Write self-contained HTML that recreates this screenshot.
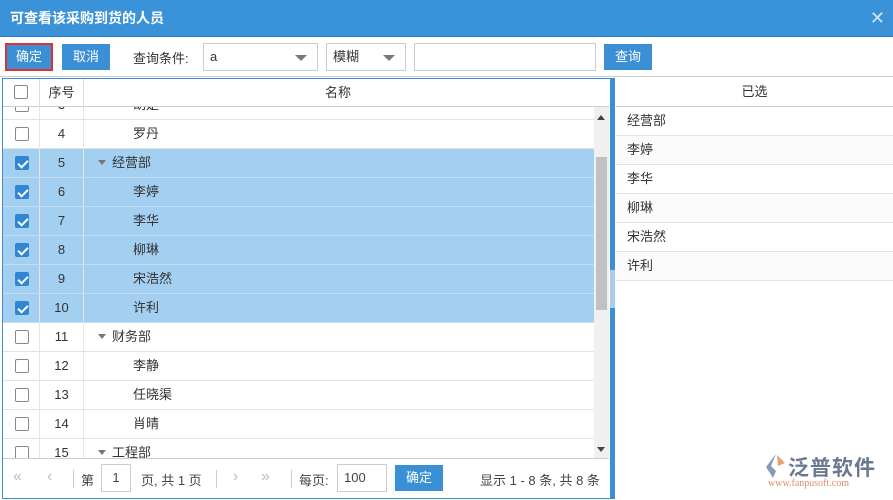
<!DOCTYPE html><html><head><meta charset="utf-8"><style>
*{box-sizing:border-box;margin:0;padding:0}
body{width:893px;height:500px;overflow:hidden;background:#fff;font-family:"Liberation Sans","Noto Sans CJK SC",sans-serif;font-size:13px;color:#333;position:relative}
.a{position:absolute}
.title{left:0;top:0;width:893px;height:37px;background:#3a93d8;color:#fff;font-weight:bold;font-size:14px;line-height:36px;padding-left:10px;border-bottom:1px solid #2f7fc0}
.btn{background:#3a8fd5;color:#fff;text-align:center;line-height:26px;height:26px}
.inp{border:1px solid #ccc;height:28px;background:#fff;line-height:26px;padding-left:6px}
.tri{position:absolute;right:10px;top:11px;width:0;height:0;border-left:6px solid transparent;border-right:6px solid transparent;border-top:6px solid #777}
.cb{position:absolute;left:12px;width:14px;height:14px;border:1px solid #888;border-radius:2px;background:#fff}
.cb.on{background:#2f86d2;border-color:#2f86d2}
.cb.on:after{content:"";position:absolute;left:4px;top:1px;width:4px;height:8px;border:solid #fff;border-width:0 2px 2px 0;transform:rotate(45deg)}
.row{position:absolute;left:0;width:591px;height:29px;border-bottom:1px solid #e2e2e2;line-height:28px}
.row.sel{background:#a3cff0;border-bottom-color:#c3def3}
.row .n{position:absolute;left:36px;width:45px;text-align:center;border-left:1px solid #e6e6e6;border-right:1px solid #e6e6e6;height:28px}
.row .t{position:absolute;left:95px}
.dt{display:inline-block;width:0;height:0;border-left:4px solid transparent;border-right:4px solid transparent;border-top:5px solid #777;margin-right:6px;vertical-align:2px}
.rr{position:absolute;left:0;width:278px;height:29px;border-bottom:1px solid #e2e2e2;line-height:28px;padding-left:11px}
</style></head><body>
<div class="a title">可查看该采购到货的人员</div>
<div class="a" style="right:8px;top:8px;color:#cfe4f5;font-size:18px">✕</div>
<div class="a btn" style="left:5px;top:43px;width:48px;height:28px;border:2px solid #e03030;line-height:24px">确定</div>
<div class="a btn" style="left:62px;top:44px;width:48px">取消</div>
<div class="a" style="left:133px;top:48px;font-size:13px">查询条件:</div>
<div class="a inp" style="left:203px;top:43px;width:115px">a<span class="tri"></span></div>
<div class="a inp" style="left:326px;top:43px;width:80px">模糊<span class="tri"></span></div>
<div class="a inp" style="left:414px;top:43px;width:182px"></div>
<div class="a btn" style="left:604px;top:44px;width:48px">查询</div>
<div class="a" style="left:0;top:76px;width:893px;height:1px;background:#ccc"></div>

<div class="a" style="left:2px;top:78px;width:613px;height:421px;border:1px solid #3a8fd5;border-right:5px solid #3a8fd5;overflow:hidden">
 <div class="a" style="left:0;top:0;width:606px;height:28px;border-bottom:1px solid #ccc;background:#fff;z-index:2;line-height:27px">
  <span class="cb" style="top:6px;left:11px"></span>
  <div class="a" style="left:36px;width:45px;height:28px;text-align:center;border-left:1px solid #ddd;border-right:1px solid #ddd">序号</div>
  <div class="a" style="left:322px">名称</div>
 </div>
 <div class="a" style="left:0;top:28px;width:591px;height:351px;overflow:hidden">
  <div class="row" style="top:-16px"><span class="cb" style="top:7px"></span><div class="n">3</div><div class="t" style="left:130px">胡楚</div></div>
  <div class="row" style="top:13px"><span class="cb" style="top:7px"></span><div class="n">4</div><div class="t" style="left:130px">罗丹</div></div>
  <div class="row sel" style="top:42px"><span class="cb on" style="top:7px"></span><div class="n">5</div><div class="t"><span class="dt"></span>经营部</div></div>
  <div class="row sel" style="top:71px"><span class="cb on" style="top:7px"></span><div class="n">6</div><div class="t" style="left:130px">李婷</div></div>
  <div class="row sel" style="top:100px"><span class="cb on" style="top:7px"></span><div class="n">7</div><div class="t" style="left:130px">李华</div></div>
  <div class="row sel" style="top:129px"><span class="cb on" style="top:7px"></span><div class="n">8</div><div class="t" style="left:130px">柳琳</div></div>
  <div class="row sel" style="top:158px"><span class="cb on" style="top:7px"></span><div class="n">9</div><div class="t" style="left:130px">宋浩然</div></div>
  <div class="row sel" style="top:187px"><span class="cb on" style="top:7px"></span><div class="n">10</div><div class="t" style="left:130px">许利</div></div>
  <div class="row" style="top:216px"><span class="cb" style="top:7px"></span><div class="n">11</div><div class="t"><span class="dt"></span>财务部</div></div>
  <div class="row" style="top:245px"><span class="cb" style="top:7px"></span><div class="n">12</div><div class="t" style="left:130px">李静</div></div>
  <div class="row" style="top:274px"><span class="cb" style="top:7px"></span><div class="n">13</div><div class="t" style="left:130px">任晓渠</div></div>
  <div class="row" style="top:303px"><span class="cb" style="top:7px"></span><div class="n">14</div><div class="t" style="left:130px">肖晴</div></div>
  <div class="row" style="top:332px"><span class="cb" style="top:7px"></span><div class="n">15</div><div class="t"><span class="dt"></span>工程部</div></div>
 </div>
 <div class="a" style="left:591px;top:28px;width:15px;height:351px;background:#f0f0f0">
  <div class="a" style="left:3px;top:8px;border-left:4px solid transparent;border-right:4px solid transparent;border-bottom:5px solid #444"></div>
  <div class="a" style="left:2px;top:50px;width:11px;height:153px;background:#c1c1c1"></div>
  <div class="a" style="left:3px;top:340px;border-left:4px solid transparent;border-right:4px solid transparent;border-top:5px solid #444"></div>
 </div>
 <div class="a" style="left:0;top:379px;width:606px;height:41px;border-top:1px solid #ccc;background:#fff;color:#444">
  <div class="a" style="left:10px;top:9px;color:#bbb;font-size:16px">«</div>
  <div class="a" style="left:44px;top:9px;color:#bbb;font-size:16px">‹</div>
  <div class="a" style="left:70px;top:11px;width:1px;height:18px;background:#ccc"></div>
  <div class="a" style="left:78px;top:11px">第</div>
  <div class="a inp" style="left:98px;top:5px;width:30px;text-align:center;padding:0">1</div>
  <div class="a" style="left:138px;top:11px">页, 共 1 页</div>
  <div class="a" style="left:213px;top:11px;width:1px;height:18px;background:#ccc"></div>
  <div class="a" style="left:230px;top:9px;color:#bbb;font-size:16px">›</div>
  <div class="a" style="left:258px;top:9px;color:#bbb;font-size:16px">»</div>
  <div class="a" style="left:288px;top:11px;width:1px;height:18px;background:#ccc"></div>
  <div class="a" style="left:296px;top:11px">每页:</div>
  <div class="a inp" style="left:334px;top:5px;width:50px">100</div>
  <div class="a btn" style="left:392px;top:6px;width:48px">确定</div>
  <div class="a" style="left:477px;top:11px">显示 1 - 8 条, 共 8 条</div>
 </div>
</div>
<div class="a" style="left:610px;top:270px;width:5px;height:38px;background:#a8cdee"></div>

<div class="a" style="left:616px;top:78px;width:277px;height:421px">
 <div class="a" style="left:0;top:0;width:277px;height:29px;border-bottom:1px solid #ccc;text-align:center;line-height:28px">已选</div>
 <div class="rr" style="top:29px">经营部</div>
 <div class="rr" style="top:58px;background:#fbfbfb">李婷</div>
 <div class="rr" style="top:87px">李华</div>
 <div class="rr" style="top:116px;background:#fbfbfb">柳琳</div>
 <div class="rr" style="top:145px">宋浩然</div>
 <div class="rr" style="top:174px;background:#fbfbfb">许利</div>
</div>
<div class="a" style="left:764px;top:453px;width:22px;height:26px">
 <svg width="22" height="26"><path d="M12 1 L2 14 L9 25 L12 18 L7 13 Z" fill="#8a9ab8"/><path d="M13 2 L21 10 L14 13 Z" fill="#e8a070"/></svg></div>
<div class="a" style="left:788px;top:452px;font-size:21px;color:#6a7890;font-weight:bold;letter-spacing:1px">泛普软件</div>
<div class="a" style="left:768px;top:478px;font-size:10px;color:#e08c6a;font-family:'Liberation Serif',serif">www.fanpusoft.com</div>
</body></html>
